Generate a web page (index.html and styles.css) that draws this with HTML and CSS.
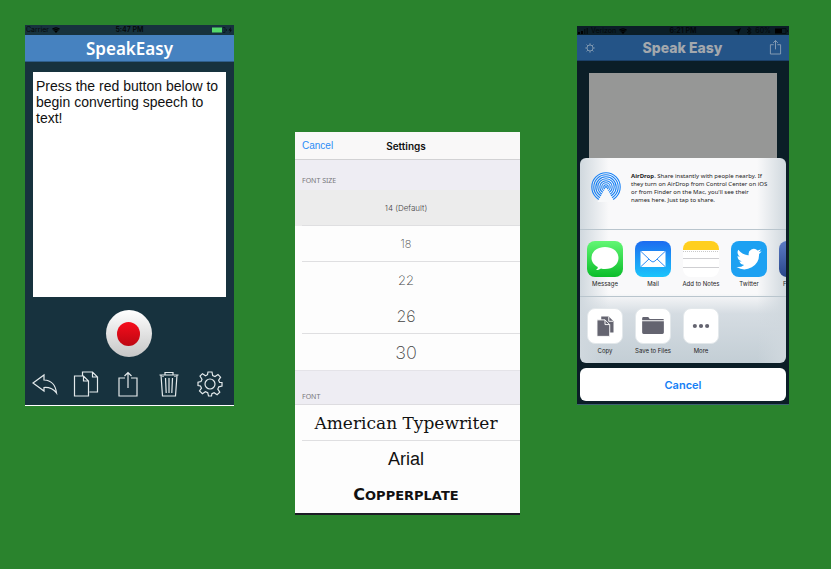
FILE: index.html
```html
<!DOCTYPE html>
<html lang="en">
<head>
<meta charset="utf-8">
<meta name="viewport" content="width=device-width, initial-scale=1">
<title>SpeakEasy</title>
<link rel="stylesheet" href="styles.css">
</head>
<body>
<main class="showcase">
  <section class="phone recorder">
    <div class="status">
      <span class="status-side">Carrier
        <svg class="wifi" viewBox="0 0 16 12"><path d="M8 12 0 3.500Q8-3 16 3.500Z"/><path class="wifi-gap" d="M1.500 5.500Q8 0 14.500 5.500M4 8Q8 4.500 12 8"/></svg>
      </span>
      <span class="status-time">5:47 PM</span>
      <span class="status-side status-end">
        <svg class="battery" viewBox="0 0 22 8"><rect x="1" y="1.500" width="10" height="5" fill="#54d86a"/><path d="M12 1.500h2v5h-2M15.500 3v2" fill="none" stroke="#0b1c24"/><path d="M20 1 17.500 4.500h1.700L18.500 7 21 3.700h-1.600z" fill="#05090b"/></svg>
      </span>
    </div>
    <header class="bar"><h1>SpeakEasy</h1></header>
    <textarea class="transcript" aria-label="Transcript">Press the red button below to begin converting speech to text!</textarea>
    <button class="record" aria-label="Record"><span class="record-dot"></span></button>
    <nav class="tools">
      <button aria-label="Undo"><svg viewBox="0 0 26 26"><path d="M1 12 12 4v5q11 .5 12.500 13Q20 16 12 16.500V20Z"/></svg></button>
      <button aria-label="Copy"><svg viewBox="0 0 26 26"><path d="M9.500 5V1h10l5 5v15h-8M19.500 1v5h5M1.500 5h9l5 5v15h-14ZM10.500 5v5h5"/></svg></button>
      <button aria-label="Share"><svg viewBox="0 0 26 26"><path d="M10 7H4v18h18V7h-6M13 17V1.500M9.500 5 13 1.500 16.500 5"/></svg></button>
      <button aria-label="Delete"><svg viewBox="0 0 26 26"><path d="M3.500 4h19M9 4V1.500h8V4M5 4l1.500 21h13L21 4M9.500 7l.7 15M13 7v15M16.500 7l-.7 15M7 5v1M19 5v1"/></svg></button>
      <button aria-label="Settings"><svg viewBox="0 0 26 26"><path d="M11 1h4l.7 3.500 2.300 1 3-2 2.600 2.700-2 3 1 2.300L25 11.500v3.500l-3.200.8-1 2.300 2 3-2.700 2.600-3-2-2.200 1L14.500 25h-3l-.8-3.300-2.300-1-3 2L2.500 20l2-2.800-1-2.200L1 14.500v-3.300l3-.7 1-2.300-2-3L5.500 2.700l3 2 2-1Z"/><circle cx="13" cy="13" r="5"/></svg></button>
    </nav>
  </section>

  <section class="phone settings">
    <header class="settings-bar">
      <button class="link-button">Cancel</button>
      <h2>Settings</h2>
    </header>
    <h3 class="group-title">FONT SIZE</h3>
    <div class="options">
      <button class="option size-14 selected ruled">14 (Default)</button>
      <button class="option size-18 ruled">18</button>
      <button class="option size-22">22</button>
      <button class="option size-26 ruled">26</button>
      <button class="option size-30">30</button>
    </div>
    <h3 class="group-title font-title">FONT</h3>
    <div class="options">
      <button class="option typewriter ruled">American Typewriter</button>
      <button class="option arial">Arial</button>
      <button class="option copperplate"><span class="engraved">Copperplate</span></button>
    </div>
  </section>

  <section class="phone sharing">
    <div class="status">
      <span class="status-side">
        <svg class="signal" viewBox="0 0 10 8"><path d="M0 5h2v2H0zM3 4h2v3H3z"/><path d="M6 2h1.500v5H6zM8.500 1H10v6H8.500z" opacity=".5"/></svg>
        Verizon
        <svg class="wifi" viewBox="0 0 16 12"><path d="M8 12 0 3.500Q8-3 16 3.500Z"/><path class="wifi-gap" d="M1.500 5.500Q8 0 14.500 5.500M4 8Q8 4.500 12 8"/></svg>
      </span>
      <span class="status-time">6:21 PM</span>
      <span class="status-side status-end">
        <svg class="signal" viewBox="0 0 10 8"><path d="M1 4 8 1 5 8 4.500 4.500Z"/></svg>
        <svg class="bluetooth" viewBox="0 0 6 8"><path d="M1 2 5 5.500 3 7.500v-7L5 2.500 1 6" fill="none" stroke="#03080b"/></svg>
        60%
        <svg class="battery-dim" viewBox="0 0 14 8"><rect x="1" y="1.500" width="7" height="5" fill="#000"/><path d="M8 1.500h4v5H8M13.500 3v2" fill="none" stroke="#050d12"/></svg>
      </span>
    </div>
    <header class="bar">
      <button class="bar-button" aria-label="Settings"><svg viewBox="0 0 14 14"><circle cx="7" cy="7" r="3.500"/><path d="M7 1.500v2M7 10.500v2M1.500 7h2M10.500 7h2M3 3l1.500 1.500M9.500 9.500 11 11M11 3 9.500 4.500M4.500 9.500 3 11"/></svg></button>
      <h1>Speak Easy</h1>
      <button class="bar-button share-button" aria-label="Share"><svg viewBox="0 0 14 18"><path d="M5 6H1.500v10h11V6H9M7 11V1.500M4.500 4 7 1.500 9.500 4"/></svg></button>
    </header>
    <textarea class="transcript" aria-label="Transcript" disabled></textarea>
    <div class="sheet">
      <div class="sheet-card">
        <div class="airdrop">
          <svg class="airdrop-icon" viewBox="0 0 30 30">
            <g fill="none" stroke="#1781f5" stroke-width="1.100"><circle cx="15" cy="15" r="14.200"/><circle cx="15" cy="15" r="12.200"/><circle cx="15" cy="15" r="10.200"/><circle cx="15" cy="15" r="8.200"/><circle cx="15" cy="15" r="6.200"/><circle cx="15" cy="15" r="4.200"/><circle cx="15" cy="15" r="2.200"/></g>
            <path d="M15 15 23.500 30h-17Z" fill="#f8f9fa"/><circle cx="15" cy="15" r="1" fill="#1781f5"/>
          </svg>
          <p><b>AirDrop</b>. Share instantly with people nearby. If<br>they turn on AirDrop from Control Center on iOS<br>or from Finder on the Mac, you'll see their<br>names here. Just tap to share.</p>
        </div>
        <div class="share-row">
          <button class="tile"><svg class="tile-art message" viewBox="0 0 36 36"><path d="M18 6c8 0 13.500 4.800 13.500 11S26 28 18 28c-1.500 0-2.800-.1-4-.5-1.200 1-3 1.700-5 1.500 1.200-.9 1.800-1.700 1.800-3C7 24 4.500 20.800 4.500 17 4.500 10.800 10 6 18 6Z" fill="#fff"/></svg>Message</button>
          <button class="tile"><svg class="tile-art mail" viewBox="0 0 36 36"><rect x="5.500" y="10" width="25" height="16" rx="1" fill="#fff"/><path d="M6 10.500 16 20q2 2 4 0L30 10.500M6 25.500l8-7.500M30 25.500 22 18" fill="none" stroke="#2f8df5"/></svg>Mail</button>
          <button class="tile"><svg class="tile-art notes" viewBox="0 0 36 36"><path d="M0 0h36v9H0z" fill="#ffcf1f"/><path d="M0 10.500h36" stroke="#c9c9c9" stroke-dasharray="1 1"/><path d="M0 17.500h36M0 26.500h36" stroke="#cfcfd2"/></svg>Add to Notes</button>
          <button class="tile"><svg class="tile-art twitter" viewBox="0 0 36 36"><path transform="translate(5.500 5.500) scale(1.050)" fill="#fff" d="M23.900 4.600a10 10 0 0 1-2.800.8 4.900 4.900 0 0 0 2.100-2.700 10 10 0 0 1-3.100 1.200 4.900 4.900 0 0 0-8.400 4.500A14 14 0 0 1 1.700 3.100a4.900 4.900 0 0 0 1.500 6.600 4.900 4.900 0 0 1-2.200-.6 4.900 4.900 0 0 0 3.900 4.900 5 5 0 0 1-2.200.1 4.900 4.900 0 0 0 4.600 3.400A9.900 9.900 0 0 1 0 19.500 14 14 0 0 0 21.500 7.100a10 10 0 0 0 2.400-2.500Z"/></svg>Twitter</button>
          <button class="tile"><svg class="tile-art facebook" viewBox="0 0 36 36"><path d="M20 36V22h-4v-5h4v-4q0-6 6-6h4v5h-3q-2 0-2 2v3h5l-1 5h-4v14Z" fill="#fff"/></svg>Facebook</button>
        </div>
        <div class="share-row">
          <button class="tile"><svg class="tile-art action" viewBox="0 0 36 36"><path d="M14 8h8l5 5v12H14Z" fill="#646470"/><path d="M22 8v5h5" fill="none" stroke="#fff"/><path d="M9.500 11.500h8.500l5 5V29H9.500Z" fill="#646470" stroke="#fff"/><path d="M18 11.500v5h5" fill="none" stroke="#fff"/></svg>Copy</button>
          <button class="tile"><svg class="tile-art action" viewBox="0 0 36 36"><path d="M6.500 10q0-1.500 1.500-1.500h5l1.500 2h14q1 0 1 1V12h-23ZM6.500 13h23v12q0 1.500-1.500 1.500H8q-1.500 0-1.500-1.500Z" fill="#646470"/></svg>Save to Files</button>
          <button class="tile"><svg class="tile-art action" viewBox="0 0 36 36"><g fill="#646470"><circle cx="11.500" cy="18" r="2.200"/><circle cx="18" cy="18" r="2.200"/><circle cx="24.500" cy="18" r="2.200"/></g></svg>More</button>
        </div>
      </div>
      <button class="sheet-cancel">Cancel</button>
    </div>
  </section>
</main>
</body>
</html>
```
FILE: styles.css
```css
* { box-sizing: border-box; }

body {
  margin: 0;
  background: #2a832d;
  font-family: Inter, "Liberation Sans", sans-serif;
}

h1, h2, h3, p { margin: 0; }

button {
  padding: 0;
  border: 0;
  background: none;
  color: inherit;
  font: inherit;
  cursor: pointer;
}

svg { display: block; }

.showcase {
  display: grid;
  grid-template-columns: 209fr 61fr 225fr 57fr 212fr;
  align-items: start;
  padding: 25px 42px 25px 25px;
}

.phone { min-width: 0; }
.recorder { grid-column: 1; }
.settings { grid-column: 3; margin-top: 107px; }
.sharing { grid-column: 5; margin-top: 1px; }

/* Status and title bars */
.status {
  display: grid;
  grid-template-columns: 1fr auto 1fr;
  align-items: center;
  height: 10px;
  padding: 0 1px;
  color: #05090b;
  font-size: 7px;
  line-height: 10px;
}

.status-time { font-weight: 600; }
.status-side { display: flex; align-items: center; gap: 3px; }
.status-end { justify-content: flex-end; }
.wifi { width: 8px; height: 6px; }
.wifi-gap { fill: none; stroke: #14303d; }
.signal { width: 10px; height: 8px; }
.bluetooth { width: 6px; height: 8px; }
.battery { width: 22px; height: 8px; }
.battery-dim { width: 14px; height: 8px; }

.bar {
  display: flex;
  align-items: center;
  justify-content: center;
  height: 27px;
}

/* Recorder */
.recorder {
  display: flex;
  flex-direction: column;
  background: #17323e;
  border-bottom: 1px solid #fff;
}

.recorder .bar {
  background: #4682c0;
  border-bottom: 1px solid #2f5f8c;
  color: #fff;
}

.recorder h1 {
  padding-top: 2px;
  font: 600 17px/26px "Noto Sans", sans-serif;
}

.transcript {
  display: block;
  resize: none;
  border: 0;
  border-radius: 0;
  overflow: hidden;
}

.recorder .transcript {
  height: 225px;
  margin: 10px 8px 0;
  padding: 6px 3px;
  background: #fff;
  color: #111;
  font: 14px/16px "Liberation Sans", sans-serif;
}

.record {
  display: grid;
  place-items: center;
  align-self: center;
  width: 46px;
  height: 47px;
  margin: 13px 2px 0 0;
  border-radius: 50%;
  background: linear-gradient(#fff, #c6c6c6);
}

.record-dot {
  width: 23px;
  height: 24px;
  border-radius: 50%;
  background: linear-gradient(#f60d1c, #bd0712);
}

.tools {
  display: flex;
  justify-content: space-between;
  padding: 14px 11px 8px 7px;
}

.tools svg {
  width: 26px;
  height: 26px;
  fill: none;
  stroke: #e4eaec;
  stroke-width: 1.2;
}

/* Settings */
.settings {
  background: #fdfdfd;
  border-bottom: 2px solid #1d1d26;
  color: #111;
}

.settings-bar {
  display: grid;
  grid-template-columns: 1fr auto 1fr;
  align-items: center;
  height: 28px;
  padding: 0 10px 0 7px;
  background: #f9f8f8;
  border-bottom: 1px solid #d2d2d4;
  font-size: 10px;
}

.settings h2 { font-size: 10px; font-weight: 600; }

.link-button {
  justify-self: start;
  color: #2c8df6;
  font-family: "Liberation Sans", sans-serif;
}

.group-title {
  display: flex;
  align-items: flex-end;
  height: 30px;
  padding: 0 7px 4px;
  background: #eeedf3;
  color: #77777c;
  font: 400 7px/10px "Noto Sans", sans-serif;
}

.font-title {
  height: 35px;
  padding-bottom: 2px;
  border-top: 1px solid #e4e3e8;
  border-bottom: 1px solid #dddce0;
}

.options { display: grid; }

.option {
  display: flex;
  align-items: center;
  justify-content: center;
  height: 36px;
  padding-right: 3px;
  color: #444;
  font-family: Inter, sans-serif;
  font-weight: 200;
}

.selected { background: #ececec; }

.ruled {
  background-image: linear-gradient(#dfdfe1, #dfdfe1);
  background-position: 7px 100%;
  background-repeat: no-repeat;
  background-size: 100% 1px;
}

.size-14 { font-size: 8px; font-weight: 300; }
.size-18 { font-size: 11px; }
.size-22 { font-size: 13px; }
.size-26 { font-size: 16px; }
.size-30 { font-size: 18px; }

.typewriter, .arial, .copperplate { color: #111; font-weight: 400; }
.typewriter { font-family: "DejaVu Serif", serif; font-size: 17px; }
.arial { font-family: "Liberation Sans", sans-serif; font-size: 18px; }

.engraved {
  display: block;
  font: 700 13px/16px "DejaVu Sans", sans-serif;
  text-transform: uppercase;
}

.engraved::first-letter { font-size: 16px; }

/* Sharing */
.sharing {
  position: relative;
  background: #0b1e27;
  border-bottom: 1px solid #3c6270;
}

.sharing .status { height: 9px; color: #03080b; }
.sharing .wifi-gap { stroke: #0b1e27; }

.sharing .bar {
  justify-content: space-between;
  height: 26px;
  padding: 0 7px;
  background: #245487;
  border-bottom: 1px solid #1b4068;
  color: #a3a8ad;
}

.sharing h1 { font-size: 14px; font-weight: 800; }

.bar-button svg {
  width: 12px;
  height: 14px;
  fill: none;
  stroke: #8ba0b5;
}

.share-button svg { width: 13px; height: 17px; }

.sharing .transcript {
  width: calc(100% - 24px);
  height: 300px;
  margin: 12px 12px 0;
  border-bottom: 0;
  background: #969796;
}

.sharing::after {
  content: "";
  display: block;
  height: 31px;
}

.sheet {
  position: absolute;
  right: 3px;
  bottom: 3px;
  left: 3px;
}

.sheet::before {
  content: "";
  position: absolute;
  inset: 12px -3px -3px;
  background: #0b1e27;
}

.sheet-card {
  position: relative;
  overflow: hidden;
  border-radius: 6px;
  background:
    linear-gradient(90deg, #d0d8de, transparent 14%, transparent 86%, #d0d8de),
    linear-gradient(#f9f9fa 66%, #d5dce2 76%, #c3ced5);
  color: #222;
}

.airdrop {
  display: flex;
  align-items: flex-start;
  gap: 10px;
  height: 71px;
  padding: 14px 0 0 11px;
}

.airdrop-icon { flex: none; width: 30px; height: 30px; }

.airdrop p {
  flex: 1;
  font-family: "Noto Sans", sans-serif;
  font-size: 6px;
  line-height: 8px;
  white-space: nowrap;
}

.share-row {
  display: flex;
  height: 67px;
  padding: 11px 0 0 1px;
  border-top: 1px solid #b9c5cd;
}

.tile {
  display: flex;
  flex: none;
  flex-direction: column;
  align-items: center;
  gap: 3px;
  width: 48px;
  font-size: 6px;
  line-height: 8px;
  white-space: nowrap;
}

.tile-art { width: 36px; height: 36px; border-radius: 8px; }
.message { background: linear-gradient(#62f774, #0bbd2a); }
.mail { background: linear-gradient(#1d6cf0, #1bc5fb); }
.notes { background: #fff; }
.twitter { background: #1da1f2; }
.facebook { background: linear-gradient(#5b7bc4, #29468a); }
.action { background: #fff; border: 1px solid #e3e8eb; }

.sheet-cancel {
  position: relative;
  display: block;
  width: 100%;
  height: 33px;
  margin-top: 5px;
  border-radius: 6px;
  background: #fff;
  color: #1580f5;
  font-size: 11px;
  font-weight: 600;
}
```
